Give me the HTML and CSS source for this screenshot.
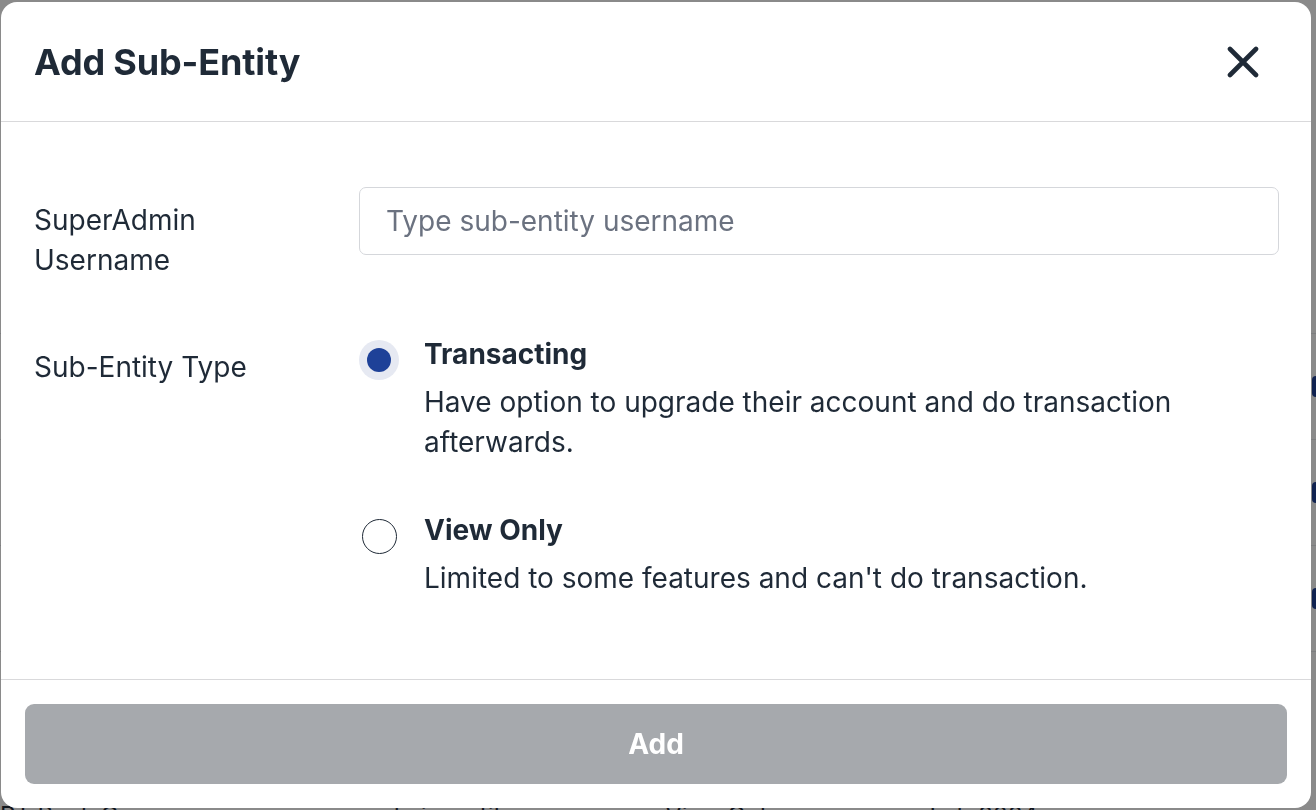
FILE: index.html
```html
<!DOCTYPE html>
<html lang="en">
<head>
<meta charset="utf-8">
<title>Add Sub-Entity</title>
<link rel="stylesheet" href="styles.css">
</head>
<body>
<div class="page">
  <div class="bg-row"><span class="bg-btn"></span></div>
  <div class="bg-row"><span class="bg-btn"></span></div>
  <div class="bg-row"><span class="bg-btn"></span></div>
  <div class="bg-row bg-last"><span class="bg-cell">PT Bank Corp</span><span class="bg-cell">superadmin_entity</span><span class="bg-cell">View Only</span><span class="bg-cell">Feb 2024</span></div>
</div>

<div class="overlay">
  <div class="modal">
    <div class="modal-header">
      <h2 class="modal-title">Add Sub-Entity</h2>
      <button class="close-btn" aria-label="Close">
        <svg width="32" height="32" viewBox="0 0 32 32" fill="none" stroke="#1f2a37" stroke-width="4.6" stroke-linecap="round"><path d="M3 3 L29 29 M29 3 L3 29"/></svg>
      </button>
    </div>
    <div class="modal-body">
      <div class="field">
        <label class="field-label" for="username">SuperAdmin Username</label>
        <input id="username" class="text-input" type="text" placeholder="Type sub-entity username">
      </div>
      <div class="field">
        <div class="field-label">Sub-Entity Type</div>
        <div class="options">
          <div class="option">
            <span class="radio radio-checked"><span class="radio-dot"></span></span>
            <div class="option-text">
              <div class="option-title">Transacting</div>
              <div class="option-desc">Have option to upgrade their account and do transaction afterwards.</div>
            </div>
          </div>
          <div class="option">
            <span class="radio"><span class="radio-ring"></span></span>
            <div class="option-text">
              <div class="option-title">View Only</div>
              <div class="option-desc">Limited to some features and can't do transaction.</div>
            </div>
          </div>
        </div>
      </div>
    </div>
    <div class="modal-footer">
      <button class="add-btn" disabled>Add</button>
    </div>
  </div>
</div>
</body>
</html>
```

FILE: styles.css
```css
* { box-sizing: border-box; }

html, body {
  margin: 0;
  padding: 0;
  width: 1316px;
  height: 810px;
  overflow: hidden;
}

body {
  font-family: Inter, "Noto Sans", "Liberation Sans", sans-serif;
  color: #1f2a37;
  background: #ffffff;
}

/* background page behind the overlay */
.page {
  height: 810px;
  overflow: hidden;
  padding-top: 333px;
}

.bg-row {
  height: 106px;
  border-top: 1px solid #e5e7eb;
  display: flex;
  align-items: center;
  gap: 150px;
  font-size: 24px;
  line-height: 30px;
  color: #1f2a37;
}

.bg-last {
  align-items: flex-start;
  padding-top: 149px;
  height: 200px;
}

.bg-cell {
  white-space: nowrap;
}

.bg-btn {
  margin-left: auto;
  margin-right: -40px;
  width: 44px;
  height: 21px;
  border-radius: 4px;
  background: #1e3f94;
}

.overlay {
  position: fixed;
  inset: 0;
  background: rgba(0, 0, 0, 0.46);
  display: flex;
  align-items: flex-start;
  justify-content: flex-start;
  padding: 2px 0 0 1px;
}

.modal {
  width: 1310px;
  height: 806px;
  background: #ffffff;
  border-radius: 16px;
  display: flex;
  flex-direction: column;
  overflow: hidden;
}

.modal-header {
  height: 120px;
  flex: 0 0 120px;
  border-bottom: 1px solid #d9d9db;
  display: flex;
  align-items: center;
  justify-content: space-between;
  padding: 0 52px 0 33px;
}

.modal-title {
  margin: 0;
  font-size: 36px;
  font-weight: 700;
  line-height: 40px;
  color: #1f2a37;
  letter-spacing: -0.15px;
}

.close-btn {
  border: 0;
  background: transparent;
  padding: 0;
  width: 32px;
  height: 32px;
  display: flex;
  align-items: center;
  justify-content: center;
  cursor: pointer;
}

.modal-body {
  flex: 1 1 auto;
  padding: 65px 32px 0 33px;
  display: flex;
  flex-direction: column;
  gap: 54px;
  font-size: 28px;
  line-height: 40px;
}

.field {
  display: flex;
  align-items: flex-start;
}

.field-label {
  flex: 0 0 280px;
  width: 280px;
  padding-top: 13px;
  margin-right: 45px;
  color: #1f2a37;
}

.text-input {
  flex: 1 1 auto;
  height: 68px;
  border: 1.5px solid #d5d7db;
  border-radius: 7px;
  padding: 0 26px;
  font-family: inherit;
  font-size: 28px;
  color: #1f2a37;
  background: #fff;
  outline: none;
}

.text-input::placeholder {
  color: #6b7280;
}

.options {
  display: flex;
  flex-direction: column;
  gap: 48px;
}

.option {
  display: flex;
  align-items: flex-start;
  gap: 25px;
}

.radio {
  flex: 0 0 40px;
  width: 40px;
  height: 40px;
  margin-top: 6px;
  display: flex;
  align-items: center;
  justify-content: center;
  border-radius: 50%;
}

.radio-checked {
  background: #e6e9f2;
}

.radio-dot {
  width: 24px;
  height: 24px;
  border-radius: 50%;
  background: #1e4198;
}

.radio-ring {
  width: 35px;
  height: 35px;
  border-radius: 50%;
  border: 1.6px solid #1f2a37;
}

.option-text {
  display: flex;
  flex-direction: column;
  gap: 8px;
}

.option-title {
  font-weight: 700;
}

.option-desc {
  max-width: 800px;
}

.modal-footer {
  flex: 0 0 auto;
  border-top: 1px solid #d9d9db;
  padding: 24px;
}

.add-btn {
  width: 100%;
  height: 80px;
  border: 0;
  border-radius: 9px;
  background: #a6a9ad;
  color: #ffffff;
  font-family: inherit;
  font-size: 28px;
  font-weight: 700;
}
```
